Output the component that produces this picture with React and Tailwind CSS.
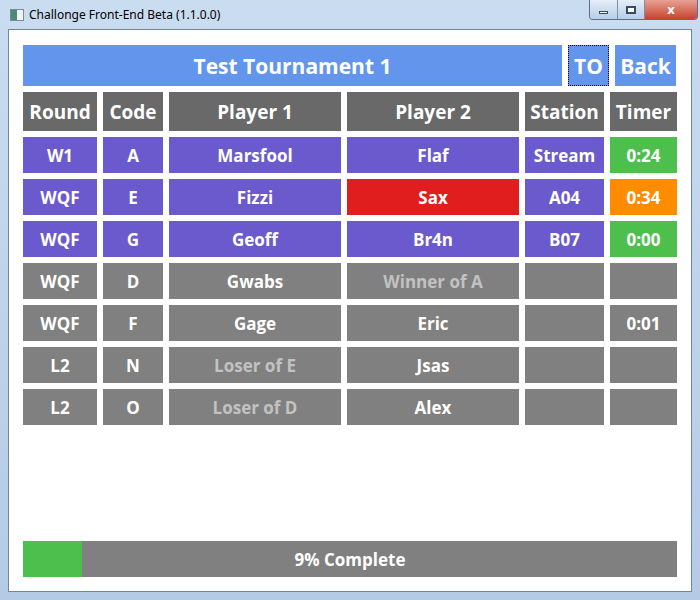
import React from 'react';

const PURPLE = 'bg-[#6a5acd]';
const GRAY = 'bg-[#808080]';

const rows = [
  { round: 'W1', code: 'A', p1: 'Marsfool', p2: 'Flaf', station: 'Stream', timer: '0:24', live: true, p2Bg: PURPLE, timerBg: 'bg-[#4cbf4c]' },
  { round: 'WQF', code: 'E', p1: 'Fizzi', p2: 'Sax', station: 'A04', timer: '0:34', live: true, p2Bg: 'bg-[#e01e1e]', timerBg: 'bg-[#ff8c00]' },
  { round: 'WQF', code: 'G', p1: 'Geoff', p2: 'Br4n', station: 'B07', timer: '0:00', live: true, p2Bg: PURPLE, timerBg: 'bg-[#4cbf4c]' },
  { round: 'WQF', code: 'D', p1: 'Gwabs', p2: 'Winner of A', p2Faded: true, station: '', timer: '' },
  { round: 'WQF', code: 'F', p1: 'Gage', p2: 'Eric', station: '', timer: '0:01' },
  { round: 'L2', code: 'N', p1: 'Loser of E', p1Faded: true, p2: 'Jsas', station: '', timer: '' },
  { round: 'L2', code: 'O', p1: 'Loser of D', p1Faded: true, p2: 'Alex', station: '', timer: '' },
];

function Cell({ bg, faded, children, w }) {
  return (
    <div className={`${bg} ${w} h-full pt-[2px] flex items-center justify-center ${faded ? 'text-[#c2c2c2]' : 'text-white'}`}>
      {children}
    </div>
  );
}

const widths = ['w-[74px]', 'w-[60px]', 'w-[172px]', 'w-[172px]', 'w-[79px]', 'w-[67px]'];

export default function App() {
  return (
    <div className="w-[700px] h-[600px] bg-gradient-to-b from-[#c9dcf0] to-[#b4cbe6] relative overflow-hidden" style={{ fontFamily: '"Open Sans", "Liberation Sans", sans-serif' }}>
      {/* title bar */}
      <div className="h-[29px] flex items-center pl-[10px]">
        <div className="w-[14px] h-[12px] border border-[#7a8a9a] bg-[#eef2f5] flex mr-[5px]">
          <div className="w-[6px] h-full bg-[#4c8a78]" />
        </div>
        <span className="text-[12px] text-black" style={{ fontFamily: '"Noto Sans", "Liberation Sans", sans-serif' }}>
          Challonge Front-End Beta (1.1.0.0)
        </span>
      </div>
      <div className="absolute top-0 right-[2px] flex h-[20px] rounded-b-[4px] overflow-hidden border border-t-0 border-[#5a6f8a]">
        <div className="w-[28px] bg-gradient-to-b from-[#e4eef9] to-[#b8cde6] flex items-end justify-center pb-[5px] border-r border-[#7d90a8]">
          <div className="w-[9px] h-[3px] bg-white border border-[#394b60]" />
        </div>
        <div className="w-[27px] bg-gradient-to-b from-[#e4eef9] to-[#b8cde6] flex items-center justify-center border-r border-[#7d90a8]">
          <div className="w-[10px] h-[8px] border-2 border-[#394b60] bg-white" />
        </div>
        <div className="w-[52px] bg-gradient-to-b from-[#e8a093] to-[#c4412c] flex items-center justify-center text-white font-bold text-[13px]">
          x
        </div>
      </div>

      {/* client area */}
      <div className="absolute left-[8px] top-[29px] w-[684px] h-[563px] bg-white border border-[#6f86a3] px-[14px] pt-[15px] flex flex-col">
        <div className="flex gap-[6px] h-[41px] text-white font-bold text-[21px]">
          <div className="w-[539px] bg-[#6495ed] pt-[2px] flex items-center justify-center">Test Tournament 1</div>
          <div className="w-[41px] bg-[#6495ed] pt-[2px] flex items-center justify-center border border-dotted border-black">TO</div>
          <div className="w-[61px] bg-[#6495ed] pt-[2px] flex items-center justify-center">Back</div>
        </div>

        <div className="mt-[6px] flex gap-[6px] h-[39px] text-[19px] font-bold">
          {['Round', 'Code', 'Player 1', 'Player 2', 'Station', 'Timer'].map((h, i) => (
            <Cell key={h} bg="bg-[#696969]" w={widths[i]}>{h}</Cell>
          ))}
        </div>

        <div className="flex flex-col gap-[6px] mt-[6px] text-[17px] font-bold">
          {rows.map((r, i) => {
            const base = r.live ? PURPLE : GRAY;
            return (
              <div key={i} className="flex gap-[6px] h-[36px]">
                <Cell bg={base} w={widths[0]}>{r.round}</Cell>
                <Cell bg={base} w={widths[1]}>{r.code}</Cell>
                <Cell bg={base} w={widths[2]} faded={r.p1Faded}>{r.p1}</Cell>
                <Cell bg={r.p2Bg || base} w={widths[3]} faded={r.p2Faded}>{r.p2}</Cell>
                <Cell bg={base} w={widths[4]}>{r.station}</Cell>
                <Cell bg={r.timerBg || base} w={widths[5]}>{r.timer}</Cell>
              </div>
            );
          })}
        </div>

        <div className="mt-auto mb-[14px] h-[36px] bg-[#808080] relative flex items-center justify-center text-white font-bold text-[17px] pt-[2px]">
          <div className="absolute left-0 top-0 h-full bg-[#4cbf4c]" style={{ width: '9%' }} />
          <span className="relative">9% Complete</span>
        </div>
      </div>
    </div>
  );
}
